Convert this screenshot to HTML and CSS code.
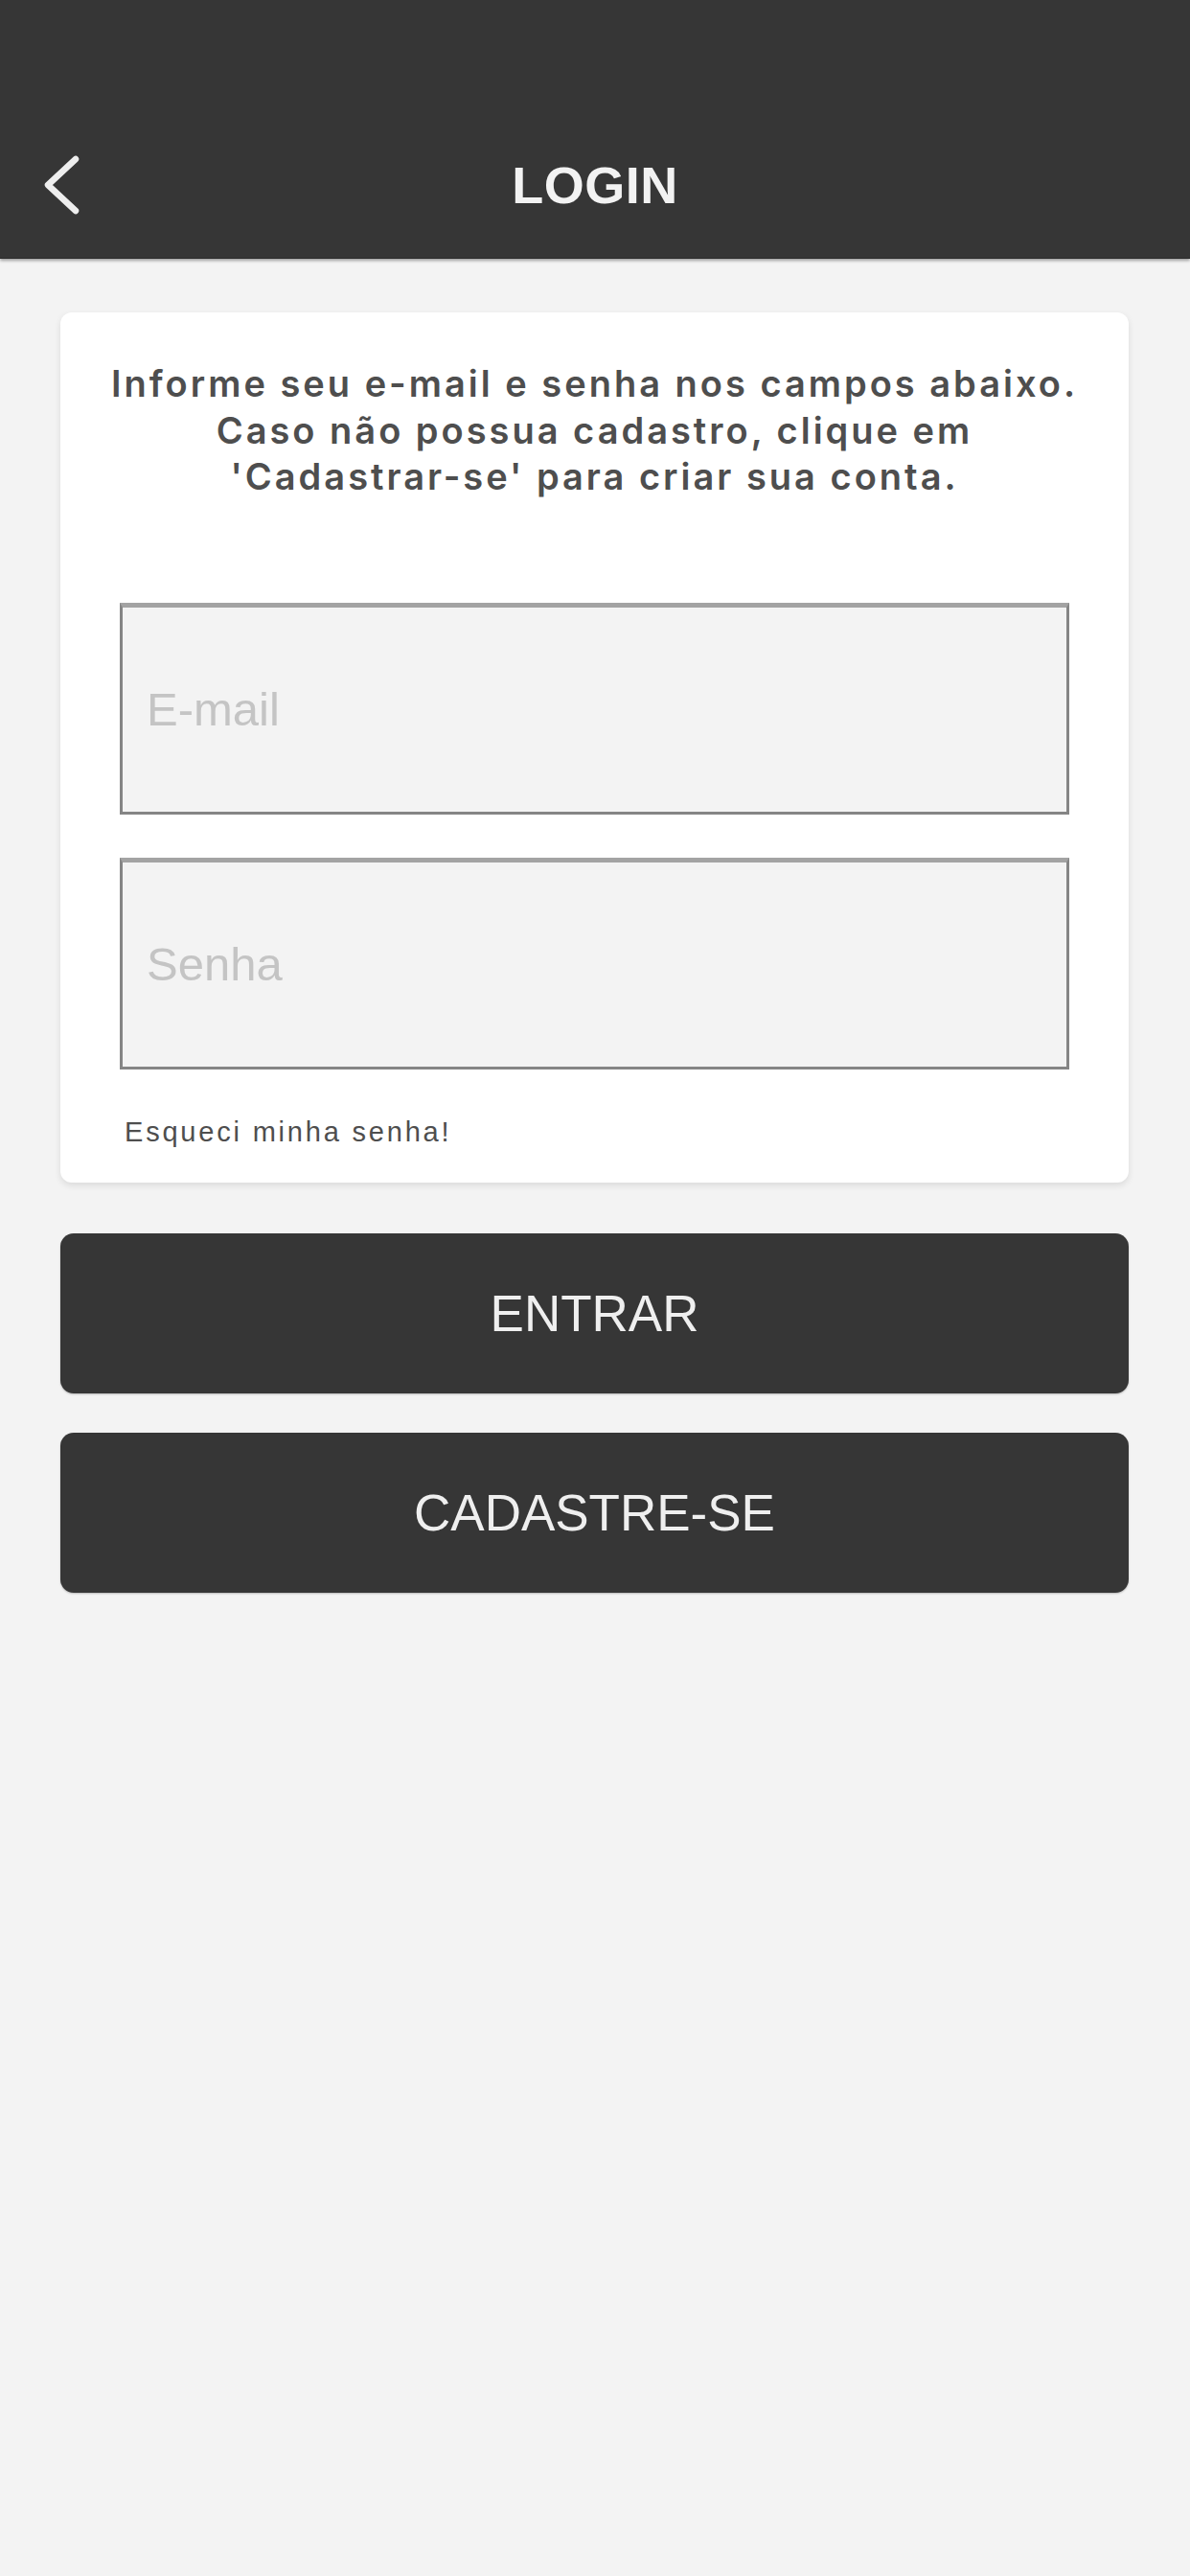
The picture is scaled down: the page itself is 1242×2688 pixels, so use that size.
FILE: index.html
```html
<!DOCTYPE html>
<html lang="pt-BR">
<head>
<meta charset="utf-8">
<title>Login</title>
<link rel="stylesheet" href="styles.css">
</head>
<body>
<header class="topbar">
  <div class="navrow">
    <button class="back" aria-label="Voltar">
      <svg width="44" height="64" viewBox="0 0 44 64"><path d="M37 5 L8 32 L37 59" fill="none" stroke="#eeeeee" stroke-width="6.5" stroke-linecap="round" stroke-linejoin="round"/></svg>
    </button>
    <h1 class="title">LOGIN</h1>
    <span class="spacer"></span>
  </div>
</header>
<main class="content">
  <section class="card">
    <p class="intro">Informe seu e-mail e senha nos campos abaixo.<br>Caso não possua cadastro, clique em<br>'Cadastrar-se' para criar sua conta.</p>
    <div class="fields">
      <input class="field" type="email" placeholder="E-mail">
      <input class="field" type="password" placeholder="Senha">
      <a class="forgot" href="#">Esqueci minha senha!</a>
    </div>
  </section>
  <button class="btn">ENTRAR</button>
  <button class="btn">CADASTRE-SE</button>
</main>
</body>
</html>
```

FILE: styles.css
```css
html, body {
  margin: 0;
  padding: 0;
}
body {
  background: #f3f3f3;
  width: 1242px;
  min-height: 2688px;
  font-family: "Liberation Sans", Arial, sans-serif;
}
.topbar {
  background: #363636;
  height: 270px;
  box-sizing: border-box;
  padding-top: 118px;
  box-shadow: 0 2px 3px rgba(0,0,0,0.35);
  border-bottom: 1px solid #2a2a2a;
}
.navrow {
  height: 150px;
  display: grid;
  grid-template-columns: 1fr auto 1fr;
  align-items: center;
}
.back {
  justify-self: start;
  background: none;
  border: 0;
  padding: 0 0 0 42px;
  margin: 0;
  display: flex;
  align-items: center;
  height: 64px;
}
.title {
  margin: 0;
  color: #f2f2f2;
  font-family: "Liberation Sans", Arial, sans-serif;
  font-weight: 700;
  font-size: 54px;
  line-height: 64px;
  letter-spacing: 0.5px;
}
.content {
  padding: 56px 64px 0 63px;
  display: flex;
  flex-direction: column;
}
.card {
  background: #ffffff;
  border-radius: 12px;
  box-shadow: 0 3px 7px rgba(0,0,0,0.10);
  padding: 50px 0 36px;
}
.intro {
  margin: 0;
  text-align: center;
  color: #4e4e4e;
  font-family: Inter, "Liberation Sans", sans-serif;
  font-weight: 600;
  font-size: 38px;
  line-height: 48.5px;
  letter-spacing: 3px;
}
.fields {
  margin: 107px 62px 0;
  display: flex;
  flex-direction: column;
  gap: 45px;
}
.field {
  display: block;
  box-sizing: border-box;
  width: 100%;
  height: 221px;
  margin: 0;
  background: #f3f3f3;
  border: 3px solid #858585;
  border-top: 5px solid #a3a3a3;
  border-radius: 0;
  padding: 0 0 0 25px;
  font-family: "Liberation Sans", Arial, sans-serif;
  font-size: 49px;
  color: #333;
  outline: none;
}
.field::placeholder {
  color: #c4c4c4;
}
.forgot {
  margin-top: 3px;
  padding-left: 5px;
  color: #4e4e4e;
  text-decoration: none;
  font-family: "Liberation Sans", Arial, sans-serif;
  font-size: 29px;
  line-height: 34px;
  letter-spacing: 2.8px;
}
.btn {
  margin: 53px 0 0;
  height: 167px;
  border: 0;
  border-radius: 14px;
  background: #363636;
  color: #efefef;
  font-family: "Liberation Sans", Arial, sans-serif;
  font-size: 53px;
  box-shadow: 0 1px 2px rgba(0,0,0,0.25);
}
.btn + .btn {
  margin-top: 41px;
}
```
